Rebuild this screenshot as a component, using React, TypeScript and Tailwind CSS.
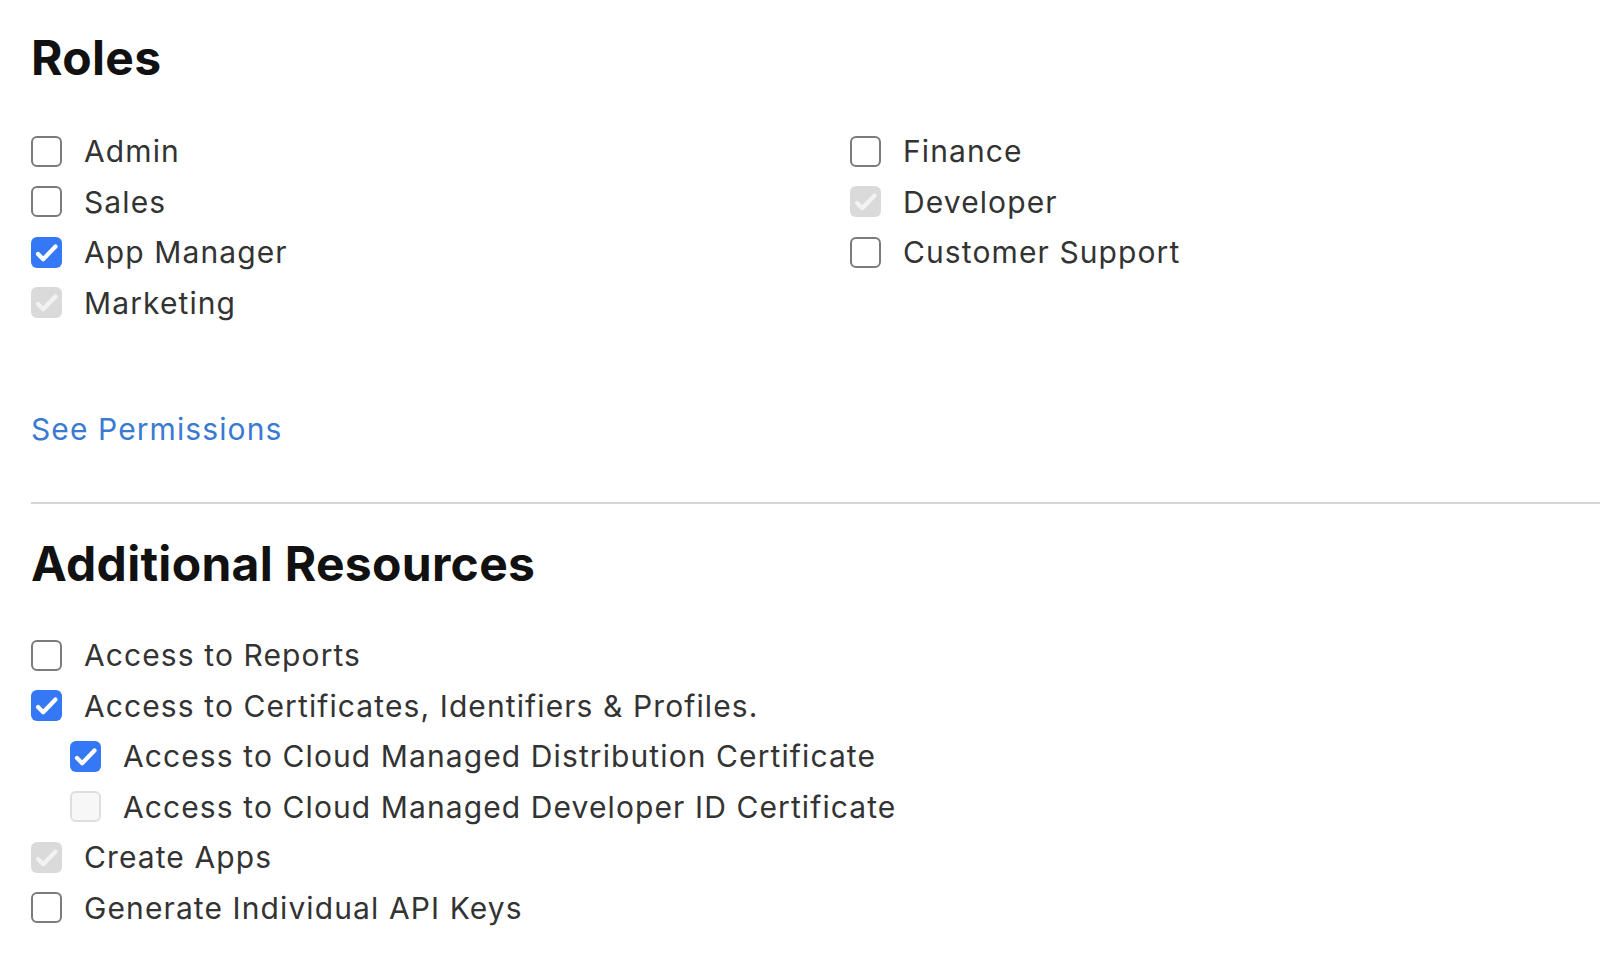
import React from "react";

type State = "unchecked" | "checked" | "disabledChecked" | "disabledUnchecked";

function Check({ color }: { color: string }) {
  return (
    <svg width="31" height="31" viewBox="0 0 31 31" fill="none">
      <path d="M7 17 L12.2 22.2 L24.5 9.5" stroke={color} strokeWidth="4.2" strokeLinecap="round" strokeLinejoin="round" />
    </svg>
  );
}

function Box({ state }: { state: State }) {
  if (state === "checked")
    return (
      <div className="w-[31px] h-[31px] rounded-[6px] bg-[#3478f6] flex items-center justify-center shrink-0">
        <Check color="#ffffff" />
      </div>
    );
  if (state === "disabledChecked")
    return (
      <div className="w-[31px] h-[31px] rounded-[6px] bg-[#dadada] flex items-center justify-center shrink-0">
        <Check color="#f2f2f2" />
      </div>
    );
  if (state === "disabledUnchecked")
    return <div className="w-[31px] h-[31px] rounded-[6px] bg-[#f7f7f7] border-2 border-[#dedede] shrink-0" />;
  return <div className="w-[31px] h-[31px] rounded-[6px] bg-white border-2 border-[#7b7b7b] shrink-0" />;
}

function Row({ label, state, indent = false }: { label: string; state: State; indent?: boolean }) {
  return (
    <div className={`h-[50.5px] flex items-center gap-[22px] ${indent ? "pl-[39px]" : ""}`}>
      <Box state={state} />
      <span className="text-[30px] leading-none tracking-[1.1px] text-[#333333] whitespace-nowrap">{label}</span>
    </div>
  );
}

export default function App() {
  return (
    <div
      className="w-[1600px] h-[963px] bg-white overflow-hidden pl-[31px]"
      style={{ fontFamily: "Inter, 'Noto Sans', sans-serif" }}
    >
      <h1 className="pt-[30px] text-[48px] leading-[56px] font-bold text-[#111111] tracking-[0.3px]">Roles</h1>
      <div className="mt-[40px] grid grid-cols-[819px_1fr]">
        <div className="flex flex-col">
          <Row label="Admin" state="unchecked" />
          <Row label="Sales" state="unchecked" />
          <Row label="App Manager" state="checked" />
          <Row label="Marketing" state="disabledChecked" />
        </div>
        <div className="flex flex-col">
          <Row label="Finance" state="unchecked" />
          <Row label="Developer" state="disabledChecked" />
          <Row label="Customer Support" state="unchecked" />
        </div>
      </div>
      <div className="mt-[76px] h-[50px] flex items-center">
        <a className="text-[30px] leading-none tracking-[1.1px] text-[#3a7ad0]">See Permissions</a>
      </div>
      <div className="mt-[48px] h-[2px] bg-[#d6d6d6]" />
      <h2 className="mt-[32px] text-[48px] leading-[56px] font-bold text-[#111111] tracking-[0.3px]">Additional Resources</h2>
      <div className="mt-[38px] flex flex-col">
        <Row label="Access to Reports" state="unchecked" />
        <Row label="Access to Certificates, Identifiers & Profiles." state="checked" />
        <Row label="Access to Cloud Managed Distribution Certificate" state="checked" indent />
        <Row label="Access to Cloud Managed Developer ID Certificate" state="disabledUnchecked" indent />
        <Row label="Create Apps" state="disabledChecked" />
        <Row label="Generate Individual API Keys" state="unchecked" />
      </div>
    </div>
  );
}
